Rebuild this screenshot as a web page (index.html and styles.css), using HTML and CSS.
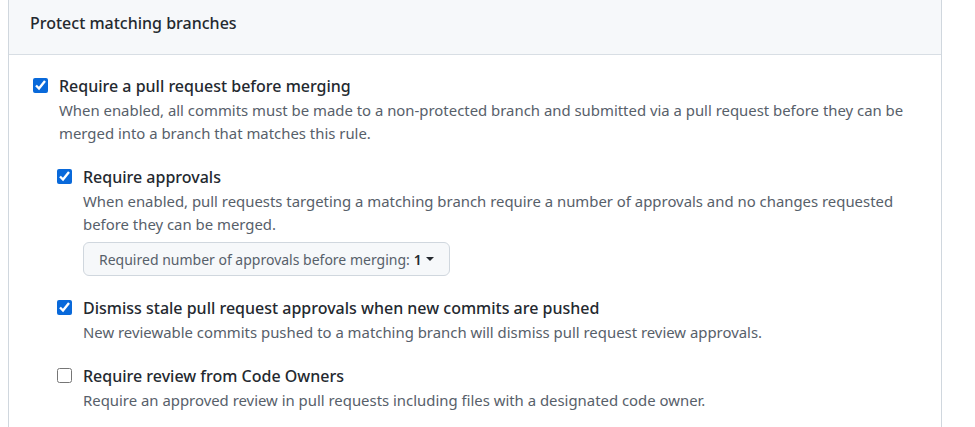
FILE: index.html
```html
<!DOCTYPE html>
<html>
<head>
<meta charset="utf-8">
<link rel="stylesheet" href="styles.css">
</head>
<body>
<div class="box">
  <div class="box-header">Protect matching branches</div>
  <div class="box-body">
    <div class="opt">
      <input type="checkbox" class="cb" checked>
      <div class="opt-text">
        <div class="opt-label">Require a pull request before merging</div>
        <div class="opt-desc">When enabled, all commits must be made to a non-protected branch and submitted via a pull request before they can be merged into a branch that matches this rule.</div>
        <div class="sub">
          <div class="opt">
            <input type="checkbox" class="cb" checked>
            <div class="opt-text">
              <div class="opt-label">Require approvals</div>
              <div class="opt-desc">When enabled, pull requests targeting a matching branch require a number of approvals and no changes requested before they can be merged.</div>
              <button class="select-btn">Required number of approvals before merging: <span class="num">1</span> <span class="caret"></span></button>
            </div>
          </div>
          <div class="opt">
            <input type="checkbox" class="cb" checked>
            <div class="opt-text">
              <div class="opt-label">Dismiss stale pull request approvals when new commits are pushed</div>
              <div class="opt-desc">New reviewable commits pushed to a matching branch will dismiss pull request review approvals.</div>
            </div>
          </div>
          <div class="opt">
            <input type="checkbox" class="cb">
            <div class="opt-text">
              <div class="opt-label">Require review from Code Owners</div>
              <div class="opt-desc">Require an approved review in pull requests including files with a designated code owner.</div>
            </div>
          </div>
        </div>
      </div>
    </div>
  </div>
</div>
</body>
</html>
```
FILE: styles.css
```css
html, body {
  margin: 0;
  padding: 0;
  background: #ffffff;
}
body {
  font-family: "Segoe UI", "Noto Sans", "Open Sans", sans-serif;
  color: #24292f;
}
.box {
  margin: -1px 0 0 8px;
  width: 932px;
  border: 1px solid #d0d7de;
  border-bottom: none;
  height: 440px;
}
.box-header {
  height: 55px;
  box-sizing: border-box;
  background: #f6f8fa;
  border-bottom: 1px solid #d8dee4;
  padding: 11px 0 0 21px;
  font-size: 16px;
  line-height: 24px;
  font-weight: 500;
}
.box-body {
  padding: 19px 20px 0 24px;
}
.opt {
  display: flex;
  gap: 11px;
  align-items: flex-start;
}
.cb {
  width: 15px;
  height: 15px;
  margin: 4px 0 0 0;
  flex: none;
  accent-color: #0969da;
}
.opt-text {
  flex: 1;
}
.opt-label {
  font-size: 16px;
  line-height: 24px;
  font-weight: 500;
}
.opt-desc {
  font-size: 14.9px;
  line-height: 23px;
  color: #57606a;
  margin-top: 1px;
}
.sub {
  display: flex;
  flex-direction: column;
  gap: 20px;
  margin: 20px 0 0 -2px;
}
.select-btn {
  margin-top: 6px;
  height: 34px;
  padding: 0 15px;
  font-family: inherit;
  font-size: 14px;
  color: #57606a;
  background: #f6f8fa;
  border: 1px solid #d0d7de;
  border-radius: 6px;
  display: inline-flex;
  align-items: center;
  gap: 4px;
}
.num {
  color: #24292f;
  font-weight: 600;
}
.caret {
  width: 0;
  height: 0;
  border-left: 4px solid transparent;
  border-right: 4px solid transparent;
  border-top: 4px solid #24292f;
}
```
